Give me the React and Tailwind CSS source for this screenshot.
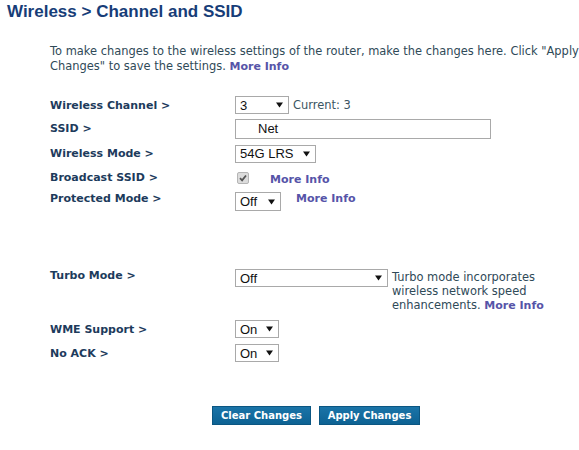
import React from 'react'

const Arrow = () => (
  <svg width="7" height="6" viewBox="0 0 7 6" className="shrink-0">
    <path d="M0 0.5 L7 0.5 L3.5 5.5 Z" fill="#111" />
  </svg>
)

// Fake drop-down box drawn like the old router UI
const Select = ({ value, className }) => (
  <div
    className={`flex items-center justify-between h-[18px] border border-[#a9a9a9] bg-white pl-[4px] pr-[5px] ${className}`}
  >
    <span className="font-['Liberation_Sans',Arial,sans-serif] text-[13px] leading-none text-[#111]">
      {value}
    </span>
    <Arrow />
  </div>
)

const MoreInfo = ({ className = '' }) => (
  <a className={`font-bold text-[11px] text-[#5654a8] cursor-pointer ${className}`}>More Info</a>
)

const Label = ({ children }) => (
  <div className="w-[185px] shrink-0 font-bold text-[11px] text-[#1d3b5c]">{children}</div>
)

export default function App() {
  return (
    <div className="w-[579px] h-[450px] bg-white overflow-hidden font-['DejaVu_Sans',Verdana,sans-serif] text-[11.45px] leading-[15px]">
      <h1 className="pl-[7px] pt-[2px] font-['Liberation_Sans',Arial,sans-serif] text-[17px] leading-[20px] font-bold text-[#173d78]">
        Wireless &gt; Channel and SSID
      </h1>

      <p className="ml-[50px] mt-[22px] text-[#2f4a58] whitespace-nowrap">
        To make changes to the wireless settings of the router, make the changes here. Click "Apply
        <br />
        Changes" to save the settings. <MoreInfo />
      </p>

      <div className="ml-[50px] mt-[20px]">
        <div className="flex items-center h-[22px]">
          <Label>Wireless Channel &gt;</Label>
          <Select value="3" className="w-[54px]" />
          <span className="ml-[4px] text-[#3b5563]">Current: 3</span>
        </div>

        <div className="flex items-center h-[25px]">
          <Label>SSID &gt;</Label>
          <div className="w-[256px] h-[20px] border border-[#a9a9a9] bg-white pl-[22px] flex items-center">
            <span className="font-['Liberation_Sans',Arial,sans-serif] text-[13px] leading-none text-[#111]">
              Net
            </span>
          </div>
        </div>

        <div className="flex items-center h-[25px]">
          <Label>Wireless Mode &gt;</Label>
          <Select value="54G LRS" className="w-[81px]" />
        </div>

        <div className="flex items-center h-[23px]">
          <Label>Broadcast SSID &gt;</Label>
          <div className="ml-[2px] w-[12px] h-[12px] rounded-[2px] border border-[#b5b5b5] bg-[#dcdcdc] flex items-center justify-center">
            <svg width="8" height="8" viewBox="0 0 8 8">
              <path d="M1 4.2 L3.1 6.3 L7 1.5" stroke="#555" strokeWidth="1.8" fill="none" />
            </svg>
          </div>
          <MoreInfo className="ml-[21px] mt-[3px]" />
        </div>

        <div className="flex items-start h-[24px] pt-[2px]">
          <Label>Protected Mode &gt;</Label>
          <Select value="Off" className="w-[46px] mt-[1px] h-[19px]" />
          <MoreInfo className="ml-[15px]" />
        </div>

        <div className="flex items-start mt-[54px]">
          <Label>
            <div className="pt-[1px]">Turbo Mode &gt;</div>
          </Label>
          <Select value="Off" className="w-[153px] mt-[2px]" />
          <div className="ml-[4px] mt-[3px] text-[#2f4a58] leading-[14px]">
            Turbo mode incorporates
            <br />
            wireless network speed
            <br />
            enhancements. <MoreInfo />
          </div>
        </div>

        <div className="flex items-center h-[22px] mt-[5px]">
          <Label>WME Support &gt;</Label>
          <Select value="On" className="w-[44px]" />
        </div>

        <div className="flex items-center h-[22px] mt-[2px]">
          <Label>No ACK &gt;</Label>
          <Select value="On" className="w-[44px]" />
        </div>
      </div>

      <div className="flex gap-[8px] ml-[212px] mt-[42px]">
        <button className="w-[99px] h-[19px] bg-gradient-to-b from-[#1a74a8] to-[#0d6293] border border-[#0b5682] text-white font-bold text-[10px] leading-none">
          Clear Changes
        </button>
        <button className="w-[101px] h-[19px] bg-gradient-to-b from-[#1a74a8] to-[#0d6293] border border-[#0b5682] text-white font-bold text-[10px] leading-none">
          Apply Changes
        </button>
      </div>
    </div>
  )
}
